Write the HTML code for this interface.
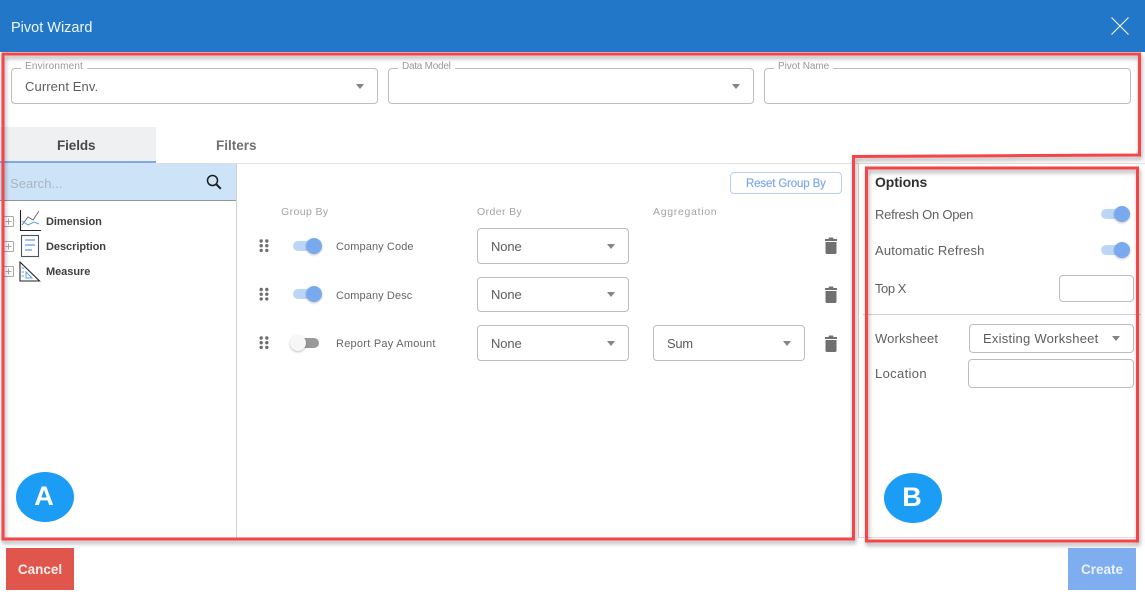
<!DOCTYPE html>
<html><head><meta charset="utf-8"><title>Pivot Wizard</title>
<style>
html,body{margin:0;padding:0;background:#fff;width:1145px;height:600px;overflow:hidden}
body{position:relative;font-family:"Liberation Sans",sans-serif;color:#555}
.a{position:absolute;white-space:nowrap}
.box{position:absolute;box-sizing:border-box;border:1px solid #bdbdbd;border-radius:4px;background:#fff}
.lg{position:absolute;background:#fff;padding:0 4px;font-size:10px;color:#9a9a9a;line-height:12px;white-space:nowrap}
.val{position:absolute;white-space:nowrap;font-size:13px;line-height:16px;color:#5d5d5d}
.arr{position:absolute;width:0;height:0;border-left:4.5px solid transparent;border-right:4.5px solid transparent;border-top:5px solid #858585}
.h{position:absolute;font-size:10.5px;line-height:12px;color:#a3a3a3;letter-spacing:.4px;white-space:nowrap}
.lab{position:absolute;font-size:11px;line-height:14px;color:#666;letter-spacing:.1px;white-space:nowrap}
.opt{position:absolute;font-size:13px;line-height:16px;color:#606060;white-space:nowrap}
.tree{position:absolute;font-size:11px;line-height:14px;font-weight:bold;color:#3f3f3f;white-space:nowrap;letter-spacing:-.05px}
.tr{position:absolute;width:24px;height:10px;border-radius:5px;background:#bdd6f8}
.kn{position:absolute;width:16px;height:16px;border-radius:50%;background:#79aaf0;box-shadow:0 1px 2px rgba(0,0,0,.25)}
svg{position:absolute;overflow:visible}
</style></head><body>

<div class="a" style="left:0;top:0;width:1145px;height:52px;background:#2277c9"></div>
<div class="a" style="left:11px;top:19px;font-size:14.5px;line-height:18px;color:#f2f7fc">Pivot Wizard</div>
<svg style="left:1110px;top:16px" width="20" height="20"><path d="M1.500 1.500L18.500 18.500M18.500 1.500L1.500 18.500" stroke="#f2f7fc" stroke-width="1.1" fill="none"/></svg>

<div class="box" style="left:11px;top:68px;width:367px;height:36px"></div>
<div class="lg" style="left:21px;top:61px;letter-spacing:.17px">Environment</div>
<div class="val" style="left:25px;top:79px;letter-spacing:.1px">Current Env.</div>
<div class="arr" style="left:355.500px;top:84px"></div>

<div class="box" style="left:388px;top:68px;width:366px;height:36px"></div>
<div class="lg" style="left:398px;top:61px;letter-spacing:-.25px">Data Model</div>
<div class="arr" style="left:731.500px;top:84px"></div>

<div class="box" style="left:764px;top:68px;width:367px;height:36px"></div>
<div class="lg" style="left:774px;top:61px;letter-spacing:-.05px">Pivot Name</div>

<div class="a" style="left:0;top:127px;width:156px;height:35px;background:#eef0f2"></div>
<div class="a" style="left:0;top:163px;width:1145px;height:1px;background:#e0e0e0"></div>
<div class="a" style="left:0;top:161px;width:156px;height:2px;background:#7aa9ee"></div>
<div class="a" style="left:57px;top:138px;font-size:13.5px;line-height:16px;font-weight:bold;color:#484848;letter-spacing:-.1px">Fields</div>
<div class="a" style="left:216px;top:138px;font-size:13.5px;line-height:16px;font-weight:bold;color:#707070">Filters</div>

<div class="a" style="left:0;top:164px;width:236px;height:36px;background:#cde3f8"></div>
<div class="a" style="left:0;top:200px;width:236px;height:1px;background:#8b98a5"></div>
<div class="a" style="left:10px;top:176px;font-size:13px;line-height:16px;color:#a6b4c2;letter-spacing:.05px">Search...</div>
<svg style="left:205px;top:173px" width="18" height="18" viewBox="0 0 18 18"><circle cx="7.500" cy="7.500" r="5" fill="none" stroke="#1c1c1c" stroke-width="1.500"/><path d="M11.200 11.200L15.800 15.800" stroke="#1c1c1c" stroke-width="2"/></svg>

<div class="a" style="left:236px;top:164px;width:1px;height:374px;background:#d0d0d0"></div>
<div class="a" style="left:858px;top:164px;width:1px;height:374px;background:#d0d0d0"></div>
<div class="a" style="left:858px;top:537px;width:280px;height:1px;background:#dcdcdc"></div>

<!-- tree -->
<svg style="left:0;top:208px" width="45" height="78" viewBox="0 0 45 78">
<g fill="none" stroke="#a8a8a8" stroke-width="1">
<rect x="3.500" y="8.500" width="10" height="10" rx="1"/><path d="M5.500 13.500H11.500M8.500 10.500V16.500"/>
<rect x="3.500" y="33.500" width="10" height="10" rx="1"/><path d="M5.500 38.500H11.500M8.500 35.500V41.500"/>
<rect x="3.500" y="58.500" width="10" height="10" rx="1"/><path d="M5.500 63.500H11.500M8.500 60.500V66.500"/>
</g>
<path d="M20.500 2V22.500H41" fill="none" stroke="#222" stroke-width="1.100"/>
<path d="M22 17L28 9L33 12L39 3" fill="none" stroke="#666" stroke-width=".9"/>
<path d="M22 13L28 17L34 14L39 16" fill="none" stroke="#5b9fe6" stroke-width="1"/>
<rect x="21.500" y="27.500" width="17" height="21" fill="none" stroke="#4a5560" stroke-width="1.100"/>
<path d="M25 32H35M25 37H35M25 42H32" stroke="#5b9fe6" stroke-width="1.200"/>
<path d="M20 54L39.500 73H20Z" fill="none" stroke="#222" stroke-width="1.100"/>
<path d="M21.500 60H24M21.500 64H24M21.500 68H24" stroke="#5b9fe6" stroke-width="1"/>
<path d="M26 70H32L26 64Z" fill="none" stroke="#5b9fe6" stroke-width="1"/>
</svg>
<div class="tree" style="left:46px;top:215px">Dimension</div>
<div class="tree" style="left:46px;top:240px">Description</div>
<div class="tree" style="left:46px;top:265px">Measure</div>

<!-- center -->
<div class="box" style="left:730px;top:172px;width:112px;height:22px;border-color:#b5d0f5"></div>
<div class="a" style="left:746px;top:177px;font-size:11.5px;line-height:15px;color:#7fa9ee;letter-spacing:-.15px;-webkit-text-stroke:.2px #7fa9ee">Reset Group By</div>

<div class="h" style="left:281px;top:206px">Group By</div>
<div class="h" style="left:477px;top:206px">Order By</div>
<div class="h" style="left:653px;top:206px;letter-spacing:.7px">Aggregation</div>

<svg style="left:258px;top:239px" width="12" height="112" viewBox="0 0 12 112" fill="#6f6f6f">
<g><circle cx="3.200" cy="2" r="1.700"/><circle cx="8.800" cy="2" r="1.700"/><circle cx="3.200" cy="6.700" r="1.700"/><circle cx="8.800" cy="6.700" r="1.700"/><circle cx="3.200" cy="11.400" r="1.700"/><circle cx="8.800" cy="11.400" r="1.700"/></g>
<g transform="translate(0,48.500)"><circle cx="3.200" cy="2" r="1.700"/><circle cx="8.800" cy="2" r="1.700"/><circle cx="3.200" cy="6.700" r="1.700"/><circle cx="8.800" cy="6.700" r="1.700"/><circle cx="3.200" cy="11.400" r="1.700"/><circle cx="8.800" cy="11.400" r="1.700"/></g>
<g transform="translate(0,97)"><circle cx="3.200" cy="2" r="1.700"/><circle cx="8.800" cy="2" r="1.700"/><circle cx="3.200" cy="6.700" r="1.700"/><circle cx="8.800" cy="6.700" r="1.700"/><circle cx="3.200" cy="11.400" r="1.700"/><circle cx="8.800" cy="11.400" r="1.700"/></g>
</svg>

<div class="tr" style="left:293px;top:241px"></div><div class="kn" style="left:306px;top:238px"></div>
<div class="tr" style="left:293px;top:289px"></div><div class="kn" style="left:306px;top:286px"></div>
<div class="tr" style="left:295px;top:338px;background:#999"></div><div class="kn" style="left:290px;top:335px;background:#f7f7f7"></div>

<div class="lab" style="left:336px;top:240px">Company Code</div>
<div class="lab" style="left:336px;top:289px">Company Desc</div>
<div class="lab" style="left:336px;top:337px;letter-spacing:.25px">Report Pay Amount</div>

<div class="box" style="left:477px;top:228px;width:152px;height:36px"></div>
<div class="val" style="left:491px;top:239px;letter-spacing:-.1px">None</div><div class="arr" style="left:606.500px;top:244px"></div>
<div class="box" style="left:477px;top:277px;width:152px;height:35px"></div>
<div class="val" style="left:491px;top:287px;letter-spacing:-.1px">None</div><div class="arr" style="left:606.500px;top:292px"></div>
<div class="box" style="left:477px;top:325px;width:152px;height:36px"></div>
<div class="val" style="left:491px;top:336px;letter-spacing:-.1px">None</div><div class="arr" style="left:606.500px;top:341px"></div>
<div class="box" style="left:653px;top:325px;width:152px;height:36px"></div>
<div class="val" style="left:667px;top:336px;letter-spacing:-.3px">Sum</div><div class="arr" style="left:782.500px;top:341px"></div>

<svg style="left:824px;top:237px" width="14" height="116" viewBox="0 0 14 116" fill="#707070">
<path d="M5 0.500H9L9.500 2H13V4H1V2H4.500ZM1.500 5H12.500V15.500Q12.500 17 11 17H3Q1.500 17 1.500 15.500Z"/>
<path transform="translate(0,49)" d="M5 0.500H9L9.500 2H13V4H1V2H4.500ZM1.500 5H12.500V15.500Q12.500 17 11 17H3Q1.500 17 1.500 15.500Z"/>
<path transform="translate(0,98)" d="M5 0.500H9L9.500 2H13V4H1V2H4.500ZM1.500 5H12.500V15.500Q12.500 17 11 17H3Q1.500 17 1.500 15.500Z"/>
</svg>

<!-- options -->
<div class="a" style="left:875px;top:174px;font-size:14px;line-height:17px;font-weight:bold;color:#303030;letter-spacing:-.1px">Options</div>
<div class="opt" style="left:875px;top:207px;letter-spacing:-.25px">Refresh On Open</div>
<div class="opt" style="left:875px;top:243px;letter-spacing:.15px">Automatic Refresh</div>
<div class="opt" style="left:875px;top:281px;letter-spacing:-.45px">Top X</div>
<div class="opt" style="left:875px;top:331px;letter-spacing:.13px">Worksheet</div>
<div class="opt" style="left:875px;top:366px;letter-spacing:.35px">Location</div>
<div class="tr" style="left:1101px;top:209px"></div><div class="kn" style="left:1114px;top:206px"></div>
<div class="tr" style="left:1101px;top:245px"></div><div class="kn" style="left:1114px;top:242px"></div>
<div class="box" style="left:1059px;top:275px;width:75px;height:27px"></div>
<div class="a" style="left:863px;top:314px;width:278px;height:1px;background:#d4d4d4"></div>
<div class="box" style="left:969px;top:324px;width:165px;height:29px"></div>
<div class="val" style="left:983px;top:331px;letter-spacing:.25px">Existing Worksheet</div>
<div class="arr" style="left:1111.500px;top:336px"></div>
<div class="box" style="left:968px;top:359px;width:166px;height:29px"></div>

<!-- annotations -->
<svg style="left:0;top:0" width="1145" height="600">
<defs><filter id="s" x="-5%" y="-5%" width="110%" height="110%"><feDropShadow dx="1" dy="3" stdDeviation="2" flood-color="#000" flood-opacity=".35"/></filter></defs>
<g fill="none" stroke="#f4444a" stroke-width="3" filter="url(#s)">
<path d="M3 54H1139.500V155L853.500 156.500V539H3Z"/>
<path d="M866.500 168H1137.500V541H866.500Z"/>
</g>
</svg>
<div class="a" style="left:16px;top:472px;width:58px;height:50px;border-radius:50%;background:#1b9df5;color:#fff;font-size:27px;font-weight:bold;line-height:48px;text-indent:-2px;text-align:center">A</div>
<div class="a" style="left:884px;top:473px;width:58px;height:50px;border-radius:50%;background:#1b9df5;color:#fff;font-size:27px;font-weight:bold;line-height:49px;text-indent:-2px;text-align:center">B</div>

<!-- footer -->
<div class="a" style="left:6px;top:548px;width:68px;height:42px;background:#e0564d;color:#fbeeed;font-size:13.5px;font-weight:bold;line-height:44px;text-align:center">Cancel</div>
<div class="a" style="left:1068px;top:548px;width:68px;height:42px;background:#7eaef0;color:#eaf2fd;font-size:13.5px;font-weight:bold;line-height:44px;text-align:center">Create</div>
</body></html>
